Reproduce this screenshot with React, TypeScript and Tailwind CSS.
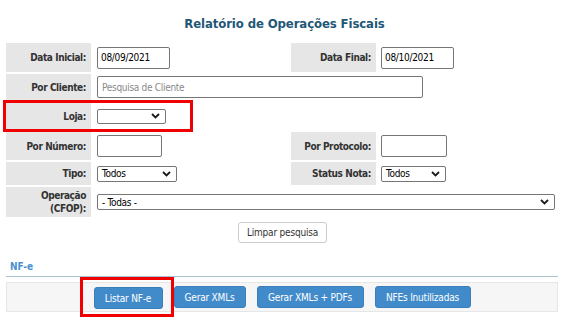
import React from "react";

const Chevron = () => (
  <svg width="9" height="6" viewBox="0 0 9 6" className="absolute right-[5px] top-1/2 -translate-y-1/2 pointer-events-none">
    <path d="M1 1 L4.5 4.5 L8 1" fill="none" stroke="#1a1a1a" strokeWidth="1.8" />
  </svg>
);

const Label = ({ children }: { children: React.ReactNode }) => (
  <div className="bg-[#e6e6e6] flex items-center justify-end pr-[5px] text-[10px] tracking-[-0.4px] font-bold text-[#333] leading-[13px] text-right">
    {children}
  </div>
);

const Sel = ({ w, h, text }: { w: string; h: string; text: string }) => (
  <div className={`relative ${w} ${h} border border-[#767676] rounded-[2px] bg-white flex items-center pl-[4px] text-[10px] tracking-[-0.3px] text-black`}>
    <span>{text}</span>
    <Chevron />
  </div>
);

export default function App() {
  return (
    <div className="relative w-[569px] h-[319px] bg-white font-['DejaVu_Sans_Condensed','DejaVu_Sans',sans-serif] overflow-hidden">
      <div className="h-[43px] flex items-start justify-center pt-[14px]">
        <h1 className="text-[13px] tracking-[-0.1px] font-bold text-[#1f5877] leading-[20px]">Relatório de Operações Fiscais</h1>
      </div>

      <div className="mx-[6px] grid grid-cols-[85px_196px_85px_1fr] grid-rows-[29px_26px_28px_28px_23px_30px] gap-[2px]">
        {/* row 1 */}
        <Label>Data Inicial:</Label>
        <div className="flex items-center pl-[4px]">
          <div className="w-[73px] h-[22px] border border-[#767676] rounded-[2px] flex items-center pl-[3px] text-[10px] tracking-[-0.3px] text-black">08/09/2021</div>
        </div>
        <Label>Data Final:</Label>
        <div className="flex items-center pl-[3px]">
          <div className="w-[73px] h-[22px] border border-[#767676] rounded-[2px] flex items-center pl-[3px] text-[10px] tracking-[-0.3px] text-black">08/10/2021</div>
        </div>

        {/* row 2 */}
        <Label>Por Cliente:</Label>
        <div className="col-span-3 flex items-center pl-[4px]">
          <div className="w-[326px] h-[22px] border border-[#767676] rounded-[2px] flex items-center pl-[4px] text-[10px] tracking-[-0.3px] text-[#8a8a8a]">Pesquisa de Cliente</div>
        </div>

        {/* row 3 */}
        <Label>Loja:</Label>
        <div className="col-span-3 flex items-center pl-[4px]">
          <Sel w="w-[69px]" h="h-[15px]" text="" />
        </div>

        {/* row 4 */}
        <Label>Por Número:</Label>
        <div className="flex items-center pl-[4px]">
          <div className="w-[65px] h-[22px] border border-[#767676] rounded-[2px]" />
        </div>
        <Label>Por Protocolo:</Label>
        <div className="flex items-center pl-[3px]">
          <div className="w-[66px] h-[22px] border border-[#767676] rounded-[2px]" />
        </div>

        {/* row 5 */}
        <Label>Tipo:</Label>
        <div className="flex items-center pl-[4px]">
          <Sel w="w-[80px]" h="h-[16px]" text="Todos" />
        </div>
        <Label>Status Nota:</Label>
        <div className="flex items-center pl-[3px]">
          <Sel w="w-[65px]" h="h-[16px]" text="Todos" />
        </div>

        {/* row 6 */}
        <Label>
          <span>
            Operação
            <br />
            (CFOP):
          </span>
        </Label>
        <div className="col-span-3 flex items-center pl-[4px]">
          <Sel w="w-[458px]" h="h-[16px]" text="- Todas -" />
        </div>
      </div>

      <div className="flex justify-center mt-[5px] pr-[4px]">
        <button className="w-[89px] h-[21px] border border-[#cccccc] rounded-[3px] bg-white text-[10px] tracking-[-0.2px] text-[#333]">Limpar pesquisa</button>
      </div>

      <div className="mx-[6px] mt-[18px] border-b border-[#a9c3d3] w-[552px] h-[16px] pl-[4px] text-[10px] font-bold text-[#4a8fd0] leading-[12px]">NF-e</div>

      <div className="mx-[6px] mt-[5px] w-[552px] h-[30px] bg-[#f6f6f6] border border-[#e6e6e6] flex items-center justify-center gap-[11px]">
        <div className="relative">
          <button className="w-[69px] h-[22px] rounded-[3px] bg-[#428bca] border border-[#3a7fbb] text-white text-[10px] tracking-[-0.2px]">Listar NF-e</button>
          <div className="absolute left-[-14px] right-[-11px] top-[-8px] bottom-[-8px] border-[3px] border-[#f00000]" />
        </div>
        <button className="w-[72px] h-[22px] rounded-[3px] bg-[#428bca] border border-[#3a7fbb] text-white text-[10px] tracking-[-0.2px]">Gerar XMLs</button>
        <button className="w-[107px] h-[22px] rounded-[3px] bg-[#428bca] border border-[#3a7fbb] text-white text-[10px] tracking-[-0.2px]">Gerar XMLs + PDFs</button>
        <button className="w-[96px] h-[22px] rounded-[3px] bg-[#428bca] border border-[#3a7fbb] text-white text-[10px] tracking-[-0.2px]">NFEs Inutilizadas</button>
      </div>

      <div className="absolute left-[3px] top-[100px] w-[190px] h-[32px] border-[3px] border-[#f00000] pointer-events-none" />
    </div>
  );
}
